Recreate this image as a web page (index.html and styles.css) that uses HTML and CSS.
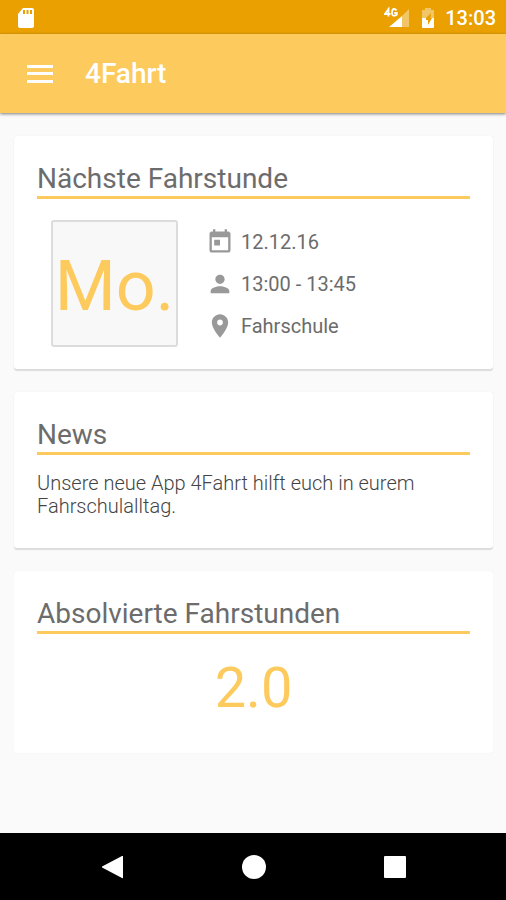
FILE: index.html
```html
<!DOCTYPE html>
<html lang="de">
<head>
<meta charset="utf-8">
<meta name="viewport" content="width=device-width, initial-scale=1">
<title>4Fahrt</title>
<link rel="stylesheet" href="styles.css">
</head>
<body>
<div class="status">
  <svg class="sd" width="18" height="20" viewBox="0 0 18 20" aria-hidden="true">
    <path fill="#fff" d="M6 0h9a2 2 0 0 1 2 2v16a2 2 0 0 1-2 2H3a2 2 0 0 1-2-2V6z"/>
    <path fill="#e9a000" d="M6 2h2v4H6zM9.500 2h2v4h-2zM13 2h2v4h-2z"/>
  </svg>
  <svg class="signal" width="26" height="22" viewBox="0 0 26 22" aria-hidden="true">
    <path fill="#fff" fill-opacity=".4" d="M25 2v18h-7V9z"/>
    <path fill="#fff" d="M18 9v11H5z"/>
    <path fill="none" stroke="#fff" stroke-width="1.800" d="M4.500 9.500V2L1 7h5.500M12.500 3.600Q11.500 2 10 2Q8 2 8 5.500t2.300 3.200q1.500 0 2.500-1V6H10.300"/>
  </svg>
  <svg class="battery" width="14" height="20" viewBox="0 0 14 20" aria-hidden="true">
    <path fill="#fff" fill-opacity=".4" d="M4 0h6v2h3v8H9.500L10 5 5 10H1V2h3z"/>
    <path fill="#fff" d="M1 10h4v2h2v5l4-7h2v9a1 1 0 0 1-1 1H2a1 1 0 0 1-1-1z"/>
  </svg>
  <time>13:03</time>
</div>
<header class="bar">
  <button class="menu" type="button" aria-label="Menü">
    <svg width="28" height="20" viewBox="0 0 28 20"><path fill="#fff" d="M1 1h26v3H1zM1 8h26v3H1zM1 16h26v3H1z"/></svg>
  </button>
  <h1>4Fahrt</h1>
</header>
<main>
  <section class="card">
    <h2>Nächste Fahrstunde</h2>
    <div class="lesson">
      <div class="day">Mo.</div>
      <ul>
        <li><svg width="28" height="28" viewBox="0 0 24 24" aria-hidden="true"><path d="M19 3h-1V1h-2v2H8V1H6v2H5c-1.110 0-1.990.9-1.990 2L3 19c0 1.100.89 2 2 2h14c1.100 0 2-.9 2-2V5c0-1.100-.9-2-2-2zm0 16H5V8h14v11zM7 10h5v5H7z"/></svg>12.12.16</li>
        <li><svg width="28" height="28" viewBox="0 0 24 24" aria-hidden="true"><path d="M12 12c2.210 0 4-1.790 4-4s-1.790-4-4-4-4 1.790-4 4 1.790 4 4 4zm0 2c-2.670 0-8 1.340-8 4v2h16v-2c0-2.660-5.330-4-8-4z"/></svg>13:00 - 13:45</li>
        <li><svg width="28" height="28" viewBox="0 0 24 24" aria-hidden="true"><path d="M12 2C8.130 2 5 5.130 5 9c0 5.250 7 13 7 13s7-7.750 7-13c0-3.870-3.130-7-7-7zm0 9.500c-1.380 0-2.500-1.120-2.500-2.500s1.120-2.500 2.500-2.500 2.500 1.120 2.500 2.500-1.120 2.500-2.500 2.500z"/></svg>Fahrschule</li>
      </ul>
    </div>
  </section>
  <section class="card news">
    <h2>News</h2>
    <p>Unsere neue App 4Fahrt hilft euch in eurem Fahrschulalltag.</p>
  </section>
  <section class="card flat">
    <h2>Absolvierte Fahrstunden</h2>
    <div class="count">2.0</div>
  </section>
</main>
<nav>
  <button type="button" aria-label="Zurück"><svg width="24" height="24" viewBox="0 0 24 24"><path d="M22 1v22a1 1 0 0 1-1 0L2 13a1 1 0 0 1 0-2L21 1z"/></svg></button>
  <button type="button" aria-label="Startseite"><svg width="24" height="24" viewBox="0 0 24 24"><circle cx="12" cy="12" r="12"/></svg></button>
  <button type="button" aria-label="Übersicht"><svg width="24" height="24" viewBox="0 0 24 24"><rect x="1" y="1" width="22" height="22" rx="1"/></svg></button>
</nav>
</body>
</html>
```
FILE: styles.css
```css
* {
  box-sizing: border-box;
}

body {
  margin: 0;
  min-height: 100vh;
  display: flex;
  flex-direction: column;
  background: #fafafa;
  color: #6c6c6c;
  font: 20px/24px Roboto, sans-serif;
}

h1, h2, p, ul {
  margin: 0;
  padding: 0;
}

button {
  border: 0;
  padding: 0;
  background: none;
  display: flex;
}

.status {
  display: flex;
  align-items: center;
  height: 34px;
  padding: 2px 10px 0 17px;
  background: #e9a000;
  color: #fff;
  font-weight: 500;
}

.signal {
  margin-left: auto;
}

.battery {
  margin: 0 10px 0 11px;
}

.bar {
  display: flex;
  align-items: center;
  gap: 31px;
  height: 79px;
  padding: 0 26px;
  background: #fdca5d;
  color: #fff;
  box-shadow: 0 1px 3px rgba(0, 0, 0, .5);
}

h1 {
  font-size: 28px;
  line-height: 32px;
  font-weight: 500;
}

main {
  flex: 1;
  display: flex;
  flex-direction: column;
  gap: 23px;
  padding: 23px 13px 23px 14px;
}

.card {
  padding: 25px 23px 22px;
  background: #fff;
  border-radius: 3px;
  box-shadow: 0 2px 1px #dcdcdc, 0 0 1px #e4e4e4;
}

.flat {
  padding-bottom: 33px;
  box-shadow: 0 0 1px #e4e4e4;
}

.news {
  padding-bottom: 30px;
}

h2 {
  font-size: 28px;
  line-height: 35px;
  font-weight: 400;
  border-bottom: 3px solid #fdca5d;
}

.lesson {
  display: flex;
  align-items: center;
  gap: 28px;
  padding: 21px 14px 0;
}

.day {
  display: grid;
  place-items: center;
  width: 127px;
  height: 127px;
  padding-top: 4px;
  border: 2px solid #dcdcdc;
  border-radius: 3px;
  background: #f8f8f8;
  color: #fdca5d;
  font-size: 70px;
  line-height: 80px;
}

ul {
  list-style: none;
}

li {
  display: flex;
  align-items: center;
  gap: 7px;
  height: 42px;
}

li svg {
  fill: #999;
}

p {
  margin-top: 17px;
  line-height: 23px;
  font-weight: 300;
  color: #444;
}

.count {
  margin-top: 22px;
  color: #fdca5d;
  font-size: 56px;
  line-height: 64px;
  text-align: center;
}

nav {
  display: flex;
  justify-content: center;
  align-items: center;
  gap: 117px;
  height: 67px;
  padding-left: 1px;
  background: #000;
}

nav svg {
  fill: #fff;
}
```
